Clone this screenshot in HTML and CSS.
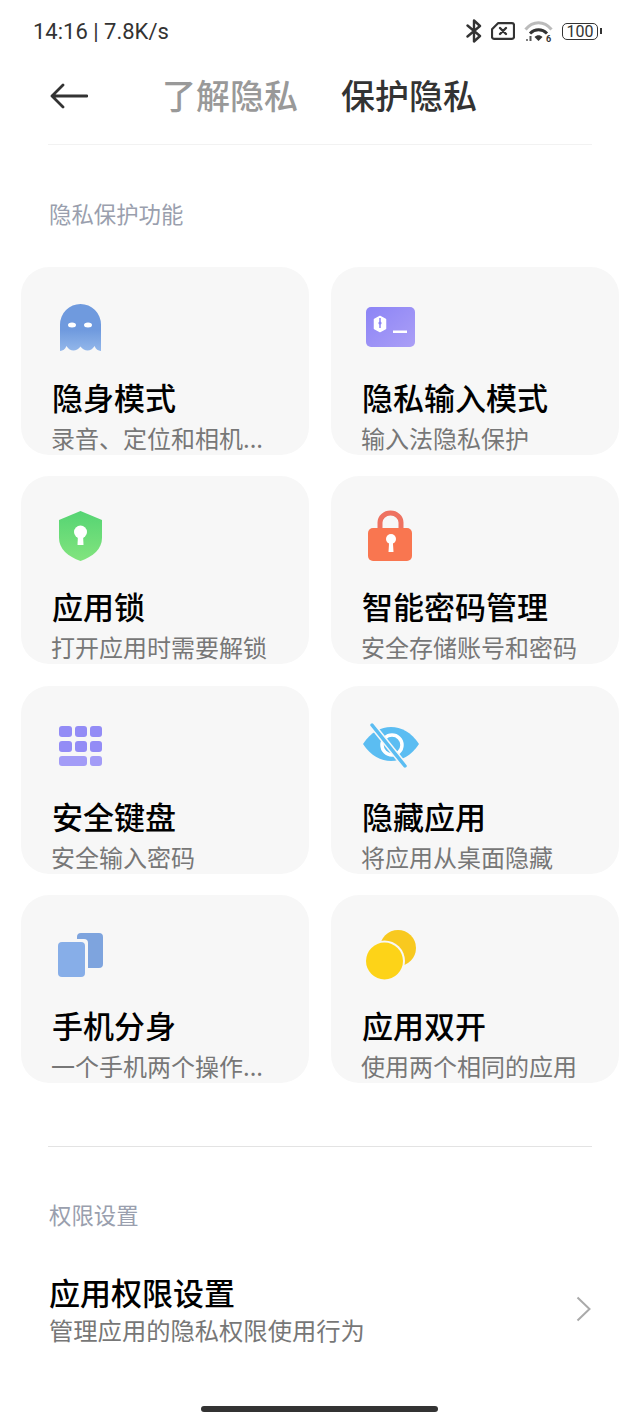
FILE: index.html
```html
<!DOCTYPE html>
<html lang="zh-CN">
<head>
<meta charset="UTF-8">
<meta name="viewport" content="width=device-width, initial-scale=1.0">
<title>保护隐私</title>
<link rel="stylesheet" href="styles.css">
</head>
<body>
<div class="status-bar">
    <span class="status-time">14:16 | 7.8K/s</span>
    <div class="status-icons">
        <svg class="icon-bt" width="16" height="24" viewBox="0 0 16 24"><path d="M1.500 6.500 14 17 8 22.500V1.500L14 7 1.500 17.500" fill="none" stroke="#333" stroke-width="2.400" stroke-linejoin="round" stroke-linecap="round"/></svg>
        <svg class="icon-sim" width="24" height="18" viewBox="0 0 24 18"><path d="M7 1.200h14a2 2 0 0 1 2 2v11.600a2 2 0 0 1-2 2H3a2 2 0 0 1-2-2V7.200z" fill="none" stroke="#333" stroke-width="2.200" stroke-linejoin="round"/><path d="M9 6l6 6M15 6l-6 6" stroke="#333" stroke-width="2.400" stroke-linecap="round"/></svg>
        <svg class="icon-wifi" width="29" height="22" viewBox="0 0 29 22">
            <path d="M1.500 9.500C9 .5 20 .5 27.500 9.500" fill="none" stroke="#bbb" stroke-width="3"/>
            <path d="M6 13.500c5-5 12-5 17 0" fill="none" stroke="#333" stroke-width="3"/>
            <path d="M10.500 17c2.500-2.500 5.500-2.500 8 0l-4 4z" fill="#333"/>
            <circle cx="3" cy="20" r="1" fill="#555"/>
            <rect x="5.500" y="16" width="2" height="5" fill="#555"/>
            <text x="22" y="21.500" class="wifi-six">6</text>
        </svg>
        <div class="battery">
            <span class="battery-body">100</span>
            <span class="battery-nub"></span>
        </div>
    </div>
</div>

<div class="top-bar">
    <svg class="back" width="38" height="26" viewBox="0 0 38 26"><path d="M13 2 2 13l11 11M2 13h35" fill="none" stroke="#333" stroke-width="2.800" stroke-linecap="round" stroke-linejoin="round"/></svg>
    <div class="tabs">
        <span class="tab tab-off">了解隐私</span>
        <span class="tab">保护隐私</span>
    </div>
</div>

<div class="section-label label-first">隐私保护功能</div>

<div class="grid">
    <div class="card">
        <svg class="card-icon" width="60" height="60" viewBox="0 0 60 60">
            <defs><linearGradient id="ghostFill" x1="0" y1="0" x2="0" y2="1"><stop offset="0.55" stop-color="#6f9ade"/><stop offset="1" stop-color="#93b7ea"/></linearGradient></defs>
            <path d="M9 50V23.500a20.500 20.500 0 0 1 41 0V50c-3-.5-5-1.500-6.500-5-3.500 6-10 6-14 .5-4 5.500-10.500 5.500-14-.5-1.500 3.500-3.500 4.500-6.500 5z" fill="url(#ghostFill)"/>
            <ellipse cx="21" cy="24" rx="4" ry="2.500" fill="#fff"/>
            <ellipse cx="37" cy="24" rx="4" ry="2.500" fill="#fff"/>
        </svg>
        <div class="card-title">隐身模式</div>
        <div class="card-sub">录音、定位和相机...</div>
    </div>
    <div class="card">
        <svg class="card-icon" width="60" height="60" viewBox="0 0 60 60">
            <defs><linearGradient id="termFill" x1="0" y1="0" x2="1" y2="1"><stop offset="0" stop-color="#8c84f6"/><stop offset="1" stop-color="#ab9ff6"/></linearGradient></defs>
            <rect x="5" y="6" width="49" height="40" rx="5" fill="url(#termFill)"/>
            <path d="M19 15.500l5.500 3v9l-5.500 3-5.500-3v-9z" fill="#fff" stroke="#fff" stroke-width="1.500" stroke-linejoin="round"/>
            <path d="M19 17v10" stroke="#8c84f6" stroke-width="1.500"/>
            <circle cx="19" cy="22" r="1.600" fill="#8c84f6"/>
            <rect x="32" y="29.500" width="14" height="2.500" fill="#fff"/>
        </svg>
        <div class="card-title">隐私输入模式</div>
        <div class="card-sub">输入法隐私保护</div>
    </div>
    <div class="card">
        <svg class="card-icon" width="60" height="60" viewBox="0 0 60 60">
            <defs><linearGradient id="shieldFill" x1="0" y1="0" x2="0" y2="1"><stop offset="0" stop-color="#55d473"/><stop offset="1" stop-color="#82e47e"/></linearGradient></defs>
            <path d="M29.500 1 51 10v18c0 11-9 18.500-21.500 23C17 46.500 8 39 8 28V10z" fill="url(#shieldFill)"/>
            <circle cx="29.500" cy="22" r="6.500" fill="#fff"/>
            <path d="M27 24h5l.5 11h-6z" fill="#fff"/>
        </svg>
        <div class="card-title">应用锁</div>
        <div class="card-sub">打开应用时需要解锁</div>
    </div>
    <div class="card">
        <svg class="card-icon" width="60" height="60" viewBox="0 0 60 60">
            <path d="M19 20v-7.500a10.500 9.500 0 0 1 21 0V20" fill="none" stroke="#ee7261" stroke-width="5"/>
            <rect x="7" y="18" width="44" height="33" rx="5" fill="#f97650"/>
            <circle cx="30" cy="29" r="5" fill="#fff"/>
            <path d="M28.200 30h3.600l.7 12h-5z" fill="#fff"/>
        </svg>
        <div class="card-title">智能密码管理</div>
        <div class="card-sub">安全存储账号和密码</div>
    </div>
    <div class="card">
        <svg class="card-icon" width="60" height="60" viewBox="0 0 60 60" fill="#938cf6">
            <rect x="8" y="6" width="13" height="11" rx="3"/>
            <rect x="24" y="6" width="12" height="11" rx="3"/>
            <rect x="39" y="6" width="12" height="11" rx="3"/>
            <rect x="8" y="21" width="13" height="11" rx="3"/>
            <rect x="24" y="21" width="12" height="11" rx="3"/>
            <rect x="39" y="21" width="12" height="11" rx="3"/>
            <rect x="8" y="36" width="28" height="10" rx="3" fill="#a39cf7"/>
            <rect x="39" y="36" width="12" height="10" rx="3" fill="#a39cf7"/>
        </svg>
        <div class="card-title">安全键盘</div>
        <div class="card-sub">安全输入密码</div>
    </div>
    <div class="card">
        <svg class="card-icon" width="60" height="60" viewBox="0 0 60 60">
            <path d="M2 24C10 12 20 7 30 7s20 5 28 17c-8 12-18 17-28 17S10 36 2 24z" fill="#5bbdf2"/>
            <circle cx="31" cy="25" r="10" fill="none" stroke="#fff" stroke-width="3.500"/>
            <path d="M11 5l33 41" stroke="#f7f7f7" stroke-width="6.500"/>
            <path d="M11 5l33 41" stroke="#5bbdf2" stroke-width="3.500" stroke-linecap="round"/>
        </svg>
        <div class="card-title">隐藏应用</div>
        <div class="card-sub">将应用从桌面隐藏</div>
    </div>
    <div class="card">
        <svg class="card-icon" width="60" height="60" viewBox="0 0 60 60">
            <path d="M26 8a4 4 0 0 1 4-4h18a4 4 0 0 1 4 4v27a4 4 0 0 1-4 4H37V14a4 4 0 0 0-4-4H26z" fill="#7ea4de"/>
            <rect x="7" y="13" width="27" height="35" rx="4" fill="#87aee8"/>
        </svg>
        <div class="card-title">手机分身</div>
        <div class="card-sub">一个手机两个操作...</div>
    </div>
    <div class="card">
        <svg class="card-icon" width="60" height="60" viewBox="0 0 60 60">
            <circle cx="37" cy="19" r="18" fill="#f8c91f"/>
            <circle cx="23.500" cy="32" r="20.500" fill="#f7f7f7"/>
            <circle cx="23.500" cy="32" r="18.500" fill="#fdd318"/>
        </svg>
        <div class="card-title">应用双开</div>
        <div class="card-sub">使用两个相同的应用</div>
    </div>
</div>

<div class="divider"></div>

<div class="section-label label-second">权限设置</div>

<div class="setting-row">
    <div>
        <div class="setting-title">应用权限设置</div>
        <div class="setting-sub">管理应用的隐私权限使用行为</div>
    </div>
    <svg class="chevron" width="15" height="26" viewBox="0 0 15 26"><path d="M1.500 1.500 13.500 13 1.500 24.500" fill="none" stroke="#aaa" stroke-width="2"/></svg>
</div>

<div class="home-bar"></div>
</body>
</html>
```

FILE: styles.css
```css
body {
    margin: 0;
    background-color: #fff;
    font-family: "Noto Sans CJK SC", "Noto Sans", sans-serif;
    color: #000;
}

/* status bar */
.status-bar {
    height: 62px;
    display: flex;
    justify-content: space-between;
    align-items: center;
    padding: 0 38px 0 33px;
}

.status-time {
    font-family: Roboto, sans-serif;
    font-size: 22px;
    color: #333;
}

.status-icons {
    display: flex;
    align-items: center;
    gap: 9px;
}

.wifi-six {
    font-family: Roboto, sans-serif;
    font-size: 9px;
    font-weight: 700;
    fill: #333;
}

.battery {
    display: flex;
    align-items: center;
    gap: 2px;
}

.battery-body {
    width: 34px;
    height: 15px;
    border: 1.5px solid #333;
    border-radius: 5px;
    font-family: Roboto, sans-serif;
    font-size: 16px;
    line-height: 15px;
    text-align: center;
    color: #333;
}

.battery-nub {
    width: 2px;
    height: 6px;
    background-color: #333;
}

/* header with the two tabs */
.top-bar {
    height: 68px;
    padding: 0 0 14px 2px;
    margin: 0 48px;
    display: flex;
    align-items: center;
    border-bottom: 1px solid #f2f2f2;
}

.tabs {
    display: flex;
    gap: 43px;
    margin-left: 74px;
    padding-bottom: 3px;
}

.tab {
    font-size: 34px;
    line-height: 44px;
    font-weight: 500;
    color: #333;
}

.tab-off {
    color: #999;
}

.section-label {
    font-size: 22.4px;
    line-height: 30px;
    color: #9a9fae;
    padding-left: 49px;
}

.label-first {
    margin-top: 53px;
}

.label-second {
    margin-top: 52px;
}

/* feature cards */
.grid {
    display: grid;
    grid-template-columns: 288px 288px;
    grid-auto-rows: 188px;
    column-gap: 22px;
    row-gap: 21.33px;
    padding: 0 21px;
    margin-top: 39px;
}

.card {
    background-color: #f7f7f7;
    border-radius: 28px;
    padding: 34px 0 0 30px;
    overflow: hidden;
    box-sizing: border-box;
}

.card-icon {
    display: block;
}

.card-title {
    font-size: 31px;
    line-height: 40px;
    font-weight: 500;
    margin: 16px 0 0 1px;
}

.card-sub {
    font-size: 24px;
    line-height: 32px;
    color: #777;
    margin-top: 5px;
    white-space: nowrap;
}

.divider {
    height: 1px;
    margin: 63px 48px 0;
    background-color: #e3e3e3;
}

/* permission row */
.setting-row {
    display: flex;
    justify-content: space-between;
    align-items: center;
    margin-top: 43px;
    padding: 0 49px 0 49px;
}

.setting-title {
    font-size: 31px;
    line-height: 40px;
    font-weight: 500;
}

.setting-sub {
    font-size: 24.3px;
    line-height: 32px;
    color: #777;
    margin-top: 2px;
}

.home-bar {
    width: 237px;
    height: 6px;
    margin: 60px 0 10px 201px;
    border-radius: 3px;
    background-color: #333;
}
```
